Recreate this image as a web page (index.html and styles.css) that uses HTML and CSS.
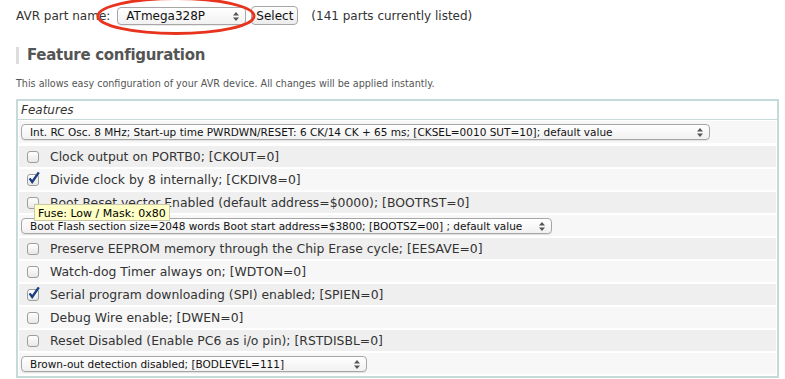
FILE: index.html
```html
<!DOCTYPE html>
<html lang="en">
  <head>
    <meta charset="UTF-8" />
    <title>AVR Fusecalc</title>
    <link rel="stylesheet" href="styles.css">
  </head>
  <body>
    <!-- part chooser -->
    <div class="part-bar">
      <span class="part-label">AVR part name:</span>
      <span class="popup part-popup">ATmega328P
        <svg class="arrows" width="6" height="9" viewBox="0 0 6 9"><path d="M3 0L6 3.5H0Z M3 9L6 5.5H0Z" fill="#555"/></svg>
      </span>
      <button class="btn">Select</button>
      <span class="part-count">(141 parts currently listed)</span>
      <svg class="circle-mark" width="164" height="40" viewBox="0 0 164 40">
        <ellipse cx="81" cy="19" rx="78" ry="17.5" fill="none" stroke="#e8331d" stroke-width="3"/>
      </svg>
    </div>

    <h2 class="section-title">Feature configuration</h2>
    <p class="section-note">This allows easy configuration of your AVR device. All changes will be applied instantly.</p>

    <div class="fuse-box">
      <div class="fuse-head">Features</div>

      <div class="row light row-first">
        <span class="popup" style="width: 689px">Int. RC Osc. 8 MHz; Start-up time PWRDWN/RESET: 6 CK/14 CK + 65 ms; [CKSEL=0010 SUT=10]; default value
          <svg class="arrows" width="6" height="9" viewBox="0 0 6 9"><path d="M3 0L6 3.5H0Z M3 9L6 5.5H0Z" fill="#555"/></svg>
        </span>
      </div>
      <div class="row gray"><span class="check"></span>Clock output on PORTB0; [CKOUT=0]</div>
      <div class="row light"><span class="check on"><svg width="14" height="14" viewBox="0 0 14 14"><path d="M2.6 7.4L5.2 11L11.8 1.4" fill="none" stroke="#1c3d80" stroke-width="2.4"/></svg></span>Divide clock by 8 internally; [CKDIV8=0]</div>
      <div class="row gray"><span class="check"></span>Boot Reset vector Enabled (default address=$0000); [BOOTRST=0]
        <span class="tooltip">Fuse: Low / Mask: 0x80</span>
      </div>
      <div class="row light">
        <span class="popup" style="width: 531px">Boot Flash section size=2048 words Boot start address=$3800; [BOOTSZ=00] ; default value
          <svg class="arrows" width="6" height="9" viewBox="0 0 6 9"><path d="M3 0L6 3.5H0Z M3 9L6 5.5H0Z" fill="#555"/></svg>
        </span>
      </div>
      <div class="row gray"><span class="check"></span>Preserve EEPROM memory through the Chip Erase cycle; [EESAVE=0]</div>
      <div class="row light"><span class="check"></span>Watch-dog Timer always on; [WDTON=0]</div>
      <div class="row gray"><span class="check on"><svg width="14" height="14" viewBox="0 0 14 14"><path d="M2.6 7.4L5.2 11L11.8 1.4" fill="none" stroke="#1c3d80" stroke-width="2.4"/></svg></span>Serial program downloading (SPI) enabled; [SPIEN=0]</div>
      <div class="row light"><span class="check"></span>Debug Wire enable; [DWEN=0]</div>
      <div class="row gray"><span class="check"></span>Reset Disabled (Enable PC6 as i/o pin); [RSTDISBL=0]</div>
      <div class="row light">
        <span class="popup" style="width: 346px">Brown-out detection disabled; [BODLEVEL=111]
          <svg class="arrows" width="6" height="9" viewBox="0 0 6 9"><path d="M3 0L6 3.5H0Z M3 9L6 5.5H0Z" fill="#555"/></svg>
        </span>
      </div>
    </div>
  </body>
</html>
```

FILE: styles.css
```css
/* page */

body {
  font-family: "DejaVu Sans", Verdana, sans-serif;
  font-size: 12px;
  color: #333;
  background-color: #fff;
  margin: 0;
  padding: 0 6px 0 16px;
}

/* part chooser */
.part-bar {
  position: relative;
  display: flex;
  align-items: center;
  height: 31px;
}

.part-label {
  margin-right: 7px;
}

.popup {
  position: relative;
  display: inline-flex;
  align-items: center;
  box-sizing: border-box;
  height: 16px;
  padding: 0 8px;
  border: 1px solid #a6a6a6;
  border-radius: 4px;
  background: linear-gradient(#fff, #f1f1f1);
  box-shadow: 0 1px 0 rgba(0, 0, 0, 0.08);
  font-size: 10.5px;
  color: #111;
  white-space: nowrap;
}

.popup .arrows {
  position: absolute;
  right: 6px;
  top: 3px;
}

.part-popup {
  width: 129px;
  height: 18px;
  font-size: 12px;
  padding-left: 8px;
}

.part-popup .arrows {
  top: 4px;
}

.btn {
  font-family: inherit;
  font-size: 12px;
  color: #111;
  height: 19px;
  margin-left: 5px;
  padding: 0 4px;
  border: 1px solid #a6a6a6;
  border-radius: 4px;
  background: linear-gradient(#fff, #ececec);
}

.part-count {
  margin-left: 13px;
}

/* the red marker round the part name */
.circle-mark {
  position: absolute;
  left: 79px;
  top: -3px;
}

/* section heading */
.section-title {
  font-size: 15px;
  letter-spacing: -0.3px;
  font-weight: bold;
  color: #555;
  margin: 16px 0 0;
  padding-left: 8px;
  border-left: 3px solid #ddd;
  line-height: 17px;
}

.section-note {
  font-size: 9.6px;
  color: #555;
  margin: 14px 0 0;
  line-height: 12px;
}

/* fuse table */
.fuse-box {
  margin-top: 9px;
  border: 2px solid #c7dada;
  padding: 0 1px 2px;
}

.fuse-head {
  font-style: italic;
  font-size: 12px;
  color: #333;
  height: 18px;
  line-height: 18px;
  padding-left: 3px;
  border-bottom: 1px solid #c7dada;
  margin: 0 -1px;
}

.row {
  position: relative;
  display: flex;
  align-items: center;
  height: 21px;
  margin-top: 2px;
  padding-left: 2px;
  font-size: 12.4px;
  white-space: nowrap;
}

.row-first {
  margin-top: 1px;
  height: 22px;
}

.row-first + .row {
  margin-top: 3px;
}

.light {
  background-color: #f7f7f7;
}

.gray {
  background-color: #efefef;
}

.check {
  position: relative;
  display: inline-block;
  box-sizing: border-box;
  width: 12px;
  height: 12px;
  margin: 0 11px 0 6px;
  border: 1px solid #9d9d9d;
  border-radius: 3px;
  background: linear-gradient(#fff, #e8e8e8);
}

.check svg {
  position: absolute;
  left: -1px;
  top: -4px;
}

/* hover tip */
.tooltip {
  position: absolute;
  left: 15px;
  top: 12px;
  padding: 0 3px;
  height: 17px;
  line-height: 17px;
  background-color: #ffffc6;
  border: 1px solid #c8c8a8;
  box-sizing: border-box;
  color: #000;
  font-size: 11px;
  z-index: 2;
}
```
